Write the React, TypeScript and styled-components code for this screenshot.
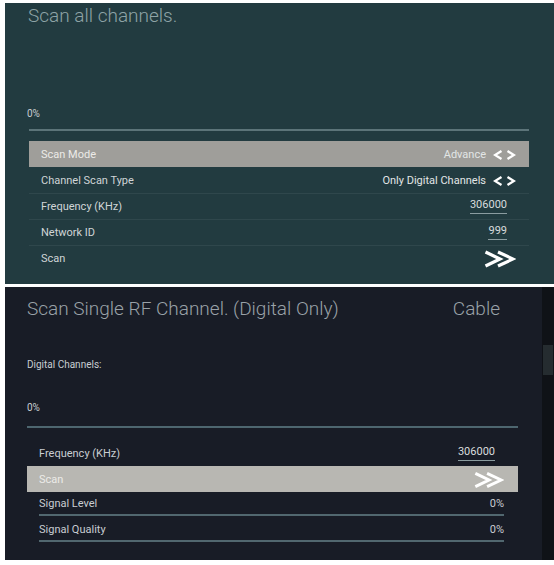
import React from 'react';
import styled, { createGlobalStyle } from 'styled-components';

const GlobalStyle = createGlobalStyle`
  html, body {
    margin: 0;
    padding: 0;
    background: #ffffff;
    font-family: Roboto, 'Liberation Sans', sans-serif;
  }
  * { box-sizing: border-box; }
`;

const Page = styled.div`
  width: 554px;
  height: 565px;
  padding: 3px 0 0 5px;
  display: flex;
  flex-direction: column;
  gap: 3px;
`;

/* ---------- top screen ---------- */

const TealPanel = styled.section`
  height: 281px;
  background: #223b40;
  padding: 1px 25px 0 22px;
  display: flex;
  flex-direction: column;
`;

const Title = styled.div<{ $color: string; $size: number }>`
  font-size: ${p => p.$size}px;
  line-height: ${p => p.$size + 4}px;
  font-weight: 300;
  color: ${p => p.$color};
  white-space: nowrap;
`;

const SmallLabel = styled.div<{ $top: number }>`
  margin-top: ${p => p.$top}px;
  font-size: 10px;
  line-height: 12px;
  color: #c9ced2;
`;

const Bar = styled.div<{ $top: number; $color: string }>`
  margin-top: ${p => p.$top}px;
  height: 2px;
  background: ${p => p.$color};
`;

const List = styled.div<{ $top: number }>`
  margin-top: ${p => p.$top}px;
  display: flex;
  flex-direction: column;
`;

const Row = styled.div<{ $active?: boolean; $divider?: boolean; $bg: string; $right: number }>`
  height: 26px;
  padding: 0 ${p => p.$right}px 0 12px;
  display: flex;
  align-items: center;
  justify-content: space-between;
  font-size: 11px;
  color: ${p => (p.$active ? '#ecebe8' : '#d0d5d7')};
  background: ${p => (p.$active ? p.$bg : 'transparent')};
  border-top: 1px solid ${p => (p.$divider ? '#2f474c' : 'transparent')};
`;

const Value = styled.div`
  display: flex;
  align-items: center;
  gap: 7px;
  color: #e2e6e6;
`;

const Underlined = styled.span<{ $inset: number }>`
  margin-right: ${p => p.$inset}px;
  padding-bottom: 2px;
  border-bottom: 1px solid #8b9ca0;
  color: #d8dcdd;
  line-height: 12px;
`;

/* ---------- bottom screen ---------- */

const DarkPanel = styled.section`
  height: 273px;
  background: #181c26;
  display: flex;
`;

const DarkBody = styled.div`
  flex: 1;
  padding: 10px 24px 0 22px;
  display: flex;
  flex-direction: column;
`;

const TitleRow = styled.div`
  display: flex;
  justify-content: space-between;
  padding-right: 18px;
`;

const ScrollTrack = styled.div`
  width: 12px;
  background: #0f1217;
  padding: 58px 1px 0 1px;
`;

const ScrollThumb = styled.div`
  height: 30px;
  background: #252c30;
`;

const SignalRow = styled.div`
  height: 26px;
  padding: 0 14px 0 12px;
`;

const SignalInner = styled.div`
  height: 24px;
  display: flex;
  align-items: center;
  justify-content: space-between;
  border-bottom: 2px solid #51676f;
  font-size: 11px;
  color: #c9cdd2;
`;

const Arrows = () => (
  <svg width="23" height="10" viewBox="0 0 23 10">
    <path d="M8.5 1 L2 5 L8.5 9" fill="none" stroke="#ffffff" strokeWidth="2.3" />
    <path d="M14.5 1 L21 5 L14.5 9" fill="none" stroke="#ffffff" strokeWidth="2.3" />
  </svg>
);

const Chevrons = ({ w = 33 }: { w?: number }) => (
  <svg width={w} height="18" viewBox="0 0 33 18">
    <path d="M2.5 2 L17 9 L2.5 16" fill="none" stroke="#ffffff" strokeWidth="3.2" />
    <path d="M15 2 L30 9 L15 16" fill="none" stroke="#ffffff" strokeWidth="3.2" />
  </svg>
);

export default function App() {
  return (
    <>
      <GlobalStyle />
      <Page>
        <TealPanel>
          <Title $color="#8ea3a6" $size={19} style={{ marginLeft: 1 }}>Scan all channels.</Title>
          <SmallLabel $top={81}>0%</SmallLabel>
          <Bar $top={9} $color="#5c7479" style={{ marginLeft: 2 }} />
          <List $top={10} style={{ marginLeft: 2 }}>
            <Row $active $bg="#9f9e9a" $right={13}>
              <span>Scan Mode</span>
              <Value>Advance <Arrows /></Value>
            </Row>
            <Row $bg="#9f9e9a" $right={13}>
              <span>Channel Scan Type</span>
              <Value>Only Digital Channels <Arrows /></Value>
            </Row>
            <Row $divider $bg="#9f9e9a" $right={13}>
              <span>Frequency (KHz)</span>
              <Underlined $inset={9}>306000</Underlined>
            </Row>
            <Row $divider $bg="#9f9e9a" $right={13}>
              <span>Network ID</span>
              <Underlined $inset={9}>999</Underlined>
            </Row>
            <Row $divider $bg="#9f9e9a" $right={13}>
              <span>Scan</span>
              <Chevrons />
            </Row>
          </List>
        </TealPanel>

        <DarkPanel>
          <DarkBody>
            <TitleRow>
              <Title $color="#9aa2a8" $size={19}>Scan Single RF Channel. (Digital Only)</Title>
              <Title $color="#9aa2a8" $size={19}>Cable</Title>
            </TitleRow>
            <SmallLabel $top={39}>Digital Channels:</SmallLabel>
            <SmallLabel $top={31}>0%</SmallLabel>
            <Bar $top={12} $color="#4d666f" />
            <List $top={12}>
              <Row $bg="#b8b7b2" $right={14}>
                <span style={{ color: '#c9cdd2' }}>Frequency (KHz)</span>
                <Underlined $inset={9}>306000</Underlined>
              </Row>
              <Row $active $bg="#b8b7b2" $right={14}>
                <span>Scan</span>
                <Chevrons w={31} />
              </Row>
              <SignalRow>
                <SignalInner>
                  <span>Signal Level</span>
                  <span>0%</span>
                </SignalInner>
              </SignalRow>
              <SignalRow>
                <SignalInner>
                  <span>Signal Quality</span>
                  <span>0%</span>
                </SignalInner>
              </SignalRow>
            </List>
          </DarkBody>
          <ScrollTrack>
            <ScrollThumb />
          </ScrollTrack>
        </DarkPanel>
      </Page>
    </>
  );
}
